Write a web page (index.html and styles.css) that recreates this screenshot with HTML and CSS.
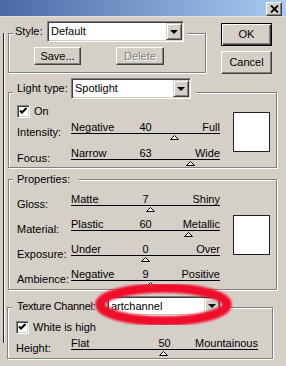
FILE: index.html
```html
<!DOCTYPE html>
<html lang="en">
<head>
  <meta charset="UTF-8" />
  <title>Lighting Effects</title>
  <link rel="stylesheet" href="styles.css">
</head>
<body>

  <!-- Title bar -->
  <div class="titlebar">
    <span class="close-btn">
      <svg width="9" height="8" viewBox="0 0 9 8"><path d="M1 0.5 L8 7.5 M8 0.5 L1 7.5" stroke="#000" stroke-width="1.8" /></svg>
    </span>
  </div>

  <div class="window">
    <div class="edge"></div>
    <div class="content">

      <div class="top">
        <fieldset class="group style-group">
          <legend>
            <label>Style:</label>
            <div class="combo combo-style"><span class="combo-text">Default</span><span class="drop"><i></i></span></div>
          </legend>
          <div class="btn-row">
            <button class="btn btn-save">Save...</button>
            <button class="btn btn-delete" disabled>Delete</button>
          </div>
        </fieldset>
        <div class="dialog-buttons">
          <button class="btn btn-big btn-default">OK</button>
          <button class="btn btn-big">Cancel</button>
        </div>
      </div>

      <!-- Light type -->
      <fieldset class="group light-group">
        <legend>
          <label>Light type:</label>
          <div class="combo combo-light"><span class="combo-text">Spotlight</span><span class="drop"><i></i></span></div>
        </legend>
        <div class="group-body">
          <div class="rows">
            <div class="check-row"><span class="checkbox checked"></span><span>On</span></div>
            <div class="row row-first">
              <span class="row-label">Intensity:</span>
              <div class="slider">
                <div class="scale"><span>Negative</span><span>40</span><span class="end">Full</span></div>
                <div class="track"><span class="thumb" style="margin-left: 99px"></span></div>
              </div>
            </div>
            <div class="row">
              <span class="row-label">Focus:</span>
              <div class="slider">
                <div class="scale"><span>Narrow</span><span>63</span><span class="end">Wide</span></div>
                <div class="track"><span class="thumb" style="margin-left: 115px"></span></div>
              </div>
            </div>
          </div>
          <div class="swatch swatch-light"></div>
        </div>
      </fieldset>

      <!-- Properties -->
      <fieldset class="group props-group">
        <legend><label>Properties:</label></legend>
        <div class="group-body">
          <div class="rows">
            <div class="row row-first">
              <span class="row-label">Gloss:</span>
              <div class="slider">
                <div class="scale"><span>Matte</span><span>7</span><span class="end">Shiny</span></div>
                <div class="track"><span class="thumb" style="margin-left: 75px"></span></div>
              </div>
            </div>
            <div class="row">
              <span class="row-label">Material:</span>
              <div class="slider">
                <div class="scale"><span>Plastic</span><span>60</span><span class="end">Metallic</span></div>
                <div class="track"><span class="thumb" style="margin-left: 113px"></span></div>
              </div>
            </div>
            <div class="row">
              <span class="row-label">Exposure:</span>
              <div class="slider">
                <div class="scale"><span>Under</span><span>0</span><span class="end">Over</span></div>
                <div class="track"><span class="thumb" style="margin-left: 70px"></span></div>
              </div>
            </div>
            <div class="row">
              <span class="row-label">Ambience:</span>
              <div class="slider">
                <div class="scale"><span>Negative</span><span>9</span><span class="end">Positive</span></div>
                <div class="track"><span class="thumb" style="margin-left: 75px"></span></div>
              </div>
            </div>
          </div>
          <div class="swatch swatch-props"></div>
        </div>
      </fieldset>

      <!-- Texture -->
      <fieldset class="group texture-group">
        <legend>
          <label>Texture Channel:</label>
          <div class="combo combo-texture"><span class="combo-text">artchannel</span><span class="drop"><i></i></span></div>
        </legend>
        <div class="group-body">
          <div class="rows">
            <div class="check-row"><span class="checkbox checked"></span><span>White is high</span></div>
            <div class="row row-height">
              <span class="row-label">Height:</span>
              <div class="slider slider-wide">
                <div class="scale"><span>Flat</span><span>50</span><span class="end">Mountainous</span></div>
                <div class="track"><span class="thumb" style="margin-left: 88px"></span></div>
              </div>
            </div>
          </div>
        </div>
      </fieldset>

    </div>
  </div>

  <!-- red marker drawn over the screenshot -->
  <svg class="marker" width="286" height="366" viewBox="0 0 286 366">
    <defs><filter id="soft"><feGaussianBlur stdDeviation="1" /></filter></defs>
    <ellipse cx="163.5" cy="304.5" rx="63.5" ry="16.5" fill="none" stroke="#f0102c" stroke-width="9.5" filter="url(#soft)" />
  </svg>

</body>
</html>
```

FILE: styles.css
```css
* { margin: 0; padding: 0; box-sizing: border-box; }

body {
  width: 286px;
  height: 366px;
  overflow: hidden;
  background: #d4d0c8;
  font-family: "Liberation Sans", Arial, sans-serif;
  font-size: 11px;
  line-height: 13px;
  color: #000;
  position: relative;
}

.titlebar {
  height: 17px;
  background: linear-gradient(to right, #4c68a6, #a8ccf2);
  border-bottom: 1px solid #e4e2dc;
  display: flex;
  justify-content: flex-end;
  padding: 2px 4px 0 0;
}

.close-btn {
  width: 16px;
  height: 14px;
  background: #d4d0c8;
  border: 1px solid;
  border-color: #fff #404040 #404040 #fff;
  box-shadow: inset -1px -1px #808080;
  display: flex;
  align-items: center;
  justify-content: center;
}

.window { display: flex; }

.edge {
  margin-left: 3px;
  margin-top: 16px;
  width: 2px;
  height: 310px;
  border-left: 1px solid #202020;
  border-right: 1px solid #fff;
}

.content { display: flex; flex-direction: column; }

/* group boxes */
.group {
  border: 1px solid #808080;
  box-shadow: inset 1px 1px #fff, 1px 1px #fff;
  padding: 0 0 0 4px;
  min-width: 0;
}

.group legend {
  display: flex;
  align-items: center;
  background: #d4d0c8;
  padding: 0 4px;
}

.group legend label { white-space: nowrap; }

.group-body { display: flex; padding-left: 4px; }

.top { display: flex; align-items: flex-start; }

.style-group {
  margin-left: 3px;
  margin-top: 4px;
  width: 198px;
  padding-bottom: 7px;
}
.style-group legend { padding: 0 3px 3px 2px; }
.style-group legend label { width: 32px; }

.btn-row {
  display: flex;
  gap: 35px;
  margin-top: 2px;
  padding-left: 21px;
}

.dialog-buttons {
  display: flex;
  flex-direction: column;
  gap: 5px;
  margin-left: 15px;
  margin-top: 6px;
}

/* buttons */
.btn {
  font: inherit;
  color: #000;
  background: #d4d0c8;
  border: 1px solid;
  border-color: #fff #404040 #404040 #fff;
  box-shadow: inset -1px -1px #808080;
  height: 18px;
}
.btn-save { width: 47px; }
.btn-delete { width: 48px; color: #808080; text-shadow: 1px 1px #fff; }
.btn-big { width: 51px; height: 23px; }
.btn-default {
  border: 1px solid #000;
  box-shadow: inset 1px 1px #fff, inset -1px -1px #404040, inset -2px -2px #808080;
}

/* combo boxes */
.combo {
  display: flex;
  align-items: center;
  height: 21px;
  background: #fff;
  border: 1px solid;
  border-color: #808080 #fff #fff #808080;
  box-shadow: inset 1px 1px #404040, inset -1px -1px #d4d0c8;
  padding: 1px;
}
.combo-text { flex: 1; padding-left: 2px; }
.combo-style { width: 137px; }
.combo-light { width: 120px; }
.combo-texture { width: 115px; height: 20px; }

.drop {
  width: 16px;
  height: 100%;
  background: #d4d0c8;
  border: 1px solid;
  border-color: #d4d0c8 #404040 #404040 #d4d0c8;
  box-shadow: inset 1px 1px #fff, inset -1px -1px #808080;
  display: flex;
  align-items: center;
  justify-content: center;
}
.drop i {
  width: 0;
  height: 0;
  border-left: 4px solid transparent;
  border-right: 4px solid transparent;
  border-top: 4px solid #000;
}

.light-group { margin-left: 3px; margin-top: 4px; width: 269px; }
.light-group legend { padding: 0 5px 7px 4px; }
.light-group legend label { width: 54px; }

.props-group { margin-left: 3px; margin-top: 5px; width: 269px; padding-bottom: 1px; }
.props-group legend { padding: 0 9px 0 4px; }
.props-group .rows { padding-top: 8px; }

.texture-group { margin-left: 2px; margin-top: 6px; width: 266px; padding-bottom: 1px; }
.texture-group legend { padding: 0 4px 2px 5px; }
.texture-group legend label { width: 90px; letter-spacing: -0.3px; }
.texture-group .check-row { margin-top: 3px; }

/* rows */
.check-row {
  display: flex;
  align-items: center;
  gap: 4px;
  height: 13px;
  margin-top: -1px;
}

.checkbox {
  width: 13px;
  height: 13px;
  background: #fff;
  border: 1px solid;
  border-color: #808080 #fff #fff #808080;
  box-shadow: inset 1px 1px #404040, inset -1px -1px #d4d0c8;
}
.checked {
  background: #fff url("data:image/svg+xml;utf8,<svg xmlns='http://www.w3.org/2000/svg' width='11' height='11'><path d='M2 4.5 L4 6.5 L8.5 2' fill='none' stroke='black' stroke-width='2'/></svg>") no-repeat 0 0;
}

.row { display: flex; align-items: center; margin-top: 6px; }
.light-group .row { margin-top: 7px; }
.light-group .row-first { margin-top: 4px; }
.props-group .row-first { margin-top: 0; }
.row-height { margin-top: 4px; }

.row-label { width: 54px; padding-top: 1px; }
.row-height .row-label { width: 55px; }

.slider { width: 149px; }
.slider-wide { width: 187px; }

.scale {
  display: grid;
  grid-template-columns: 1fr auto 1fr;
  line-height: 11px;
  height: 12px;
  border-bottom: 1px solid #000;
}
.scale .end { text-align: right; }

.track { height: 7px; padding-top: 1px; display: flex; }

.thumb {
  width: 9px;
  height: 5px;
  background: url("data:image/svg+xml;utf8,<svg xmlns='http://www.w3.org/2000/svg' width='9' height='5'><polygon points='4.5,0.5 8.5,4.5 0.5,4.5' fill='white' stroke='black' stroke-width='1'/></svg>") no-repeat;
}

.swatch {
  width: 37px;
  height: 40px;
  background: #fff;
  border: 1px solid #202020;
  margin-left: 13px;
}
.swatch-light { margin-top: 6px; }
.swatch-props { margin-top: 29px; }

.marker {
  position: absolute;
  top: 0;
  left: 0;
  pointer-events: none;
}
```
